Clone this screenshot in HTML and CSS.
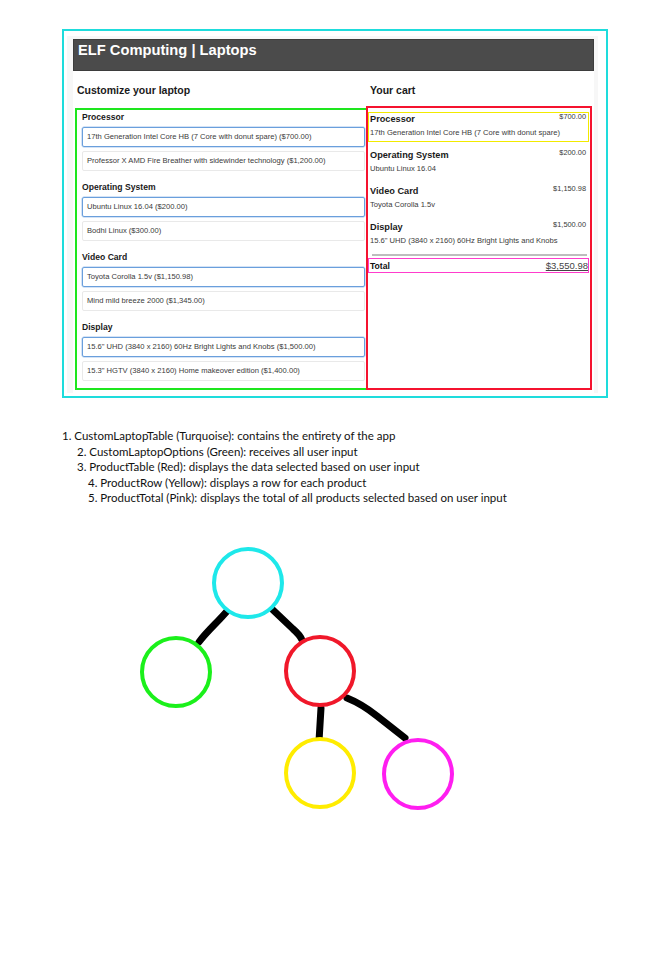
FILE: index.html
```html
<!DOCTYPE html>
<html>
<head>
<meta charset="utf-8">
<link rel="stylesheet" href="styles.css">
</head>
<body>
<div class="frame">
  <div class="card">
    <div class="topbar">ELF Computing | Laptops</div>
    <div class="main">
      <div class="col-title">Customize your laptop</div>
      <div class="col-title cart-title">Your cart</div>
      <div class="options">
        <div class="section">
          <div class="sec-head">Processor</div>
          <div class="opt selected">17th Generation Intel Core HB (7 Core with donut spare) ($700.00)</div>
          <div class="opt">Professor X AMD Fire Breather with sidewinder technology ($1,200.00)</div>
        </div>
        <div class="section">
          <div class="sec-head">Operating System</div>
          <div class="opt selected">Ubuntu Linux 16.04 ($200.00)</div>
          <div class="opt">Bodhi Linux ($300.00)</div>
        </div>
        <div class="section">
          <div class="sec-head">Video Card</div>
          <div class="opt selected">Toyota Corolla 1.5v ($1,150.98)</div>
          <div class="opt">Mind mild breeze 2000 ($1,345.00)</div>
        </div>
        <div class="section">
          <div class="sec-head">Display</div>
          <div class="opt selected">15.6" UHD (3840 x 2160) 60Hz Bright Lights and Knobs ($1,500.00)</div>
          <div class="opt">15.3" HGTV (3840 x 2160) Home makeover edition ($1,400.00)</div>
        </div>
      </div>
      <div class="cart">
        <div class="row first">
          <div class="row-head"><span class="row-name">Processor</span><span class="row-price">$700.00</span></div>
          <div class="row-sub">17th Generation Intel Core HB (7 Core with donut spare)</div>
        </div>
        <div class="row">
          <div class="row-head"><span class="row-name">Operating System</span><span class="row-price">$200.00</span></div>
          <div class="row-sub">Ubuntu Linux 16.04</div>
        </div>
        <div class="row">
          <div class="row-head"><span class="row-name">Video Card</span><span class="row-price">$1,150.98</span></div>
          <div class="row-sub">Toyota Corolla 1.5v</div>
        </div>
        <div class="row">
          <div class="row-head"><span class="row-name">Display</span><span class="row-price">$1,500.00</span></div>
          <div class="row-sub">15.6" UHD (3840 x 2160) 60Hz Bright Lights and Knobs</div>
        </div>
        <div class="sep"></div>
        <div class="total">
          <span class="total-label">Total</span>
          <span class="total-value">$3,550.98</span>
        </div>
      </div>
    </div>
  </div>
</div>

<div class="legend">
  <div class="li l1">1. CustomLaptopTable (Turquoise): contains the entirety of the app</div>
  <div class="li l2">2. CustomLaptopOptions (Green): receives all user input</div>
  <div class="li l2">3. ProductTable (Red): displays the data selected based on user input</div>
  <div class="li l3">4. ProductRow (Yellow): displays a row for each product</div>
  <div class="li l3">5. ProductTotal (Pink): displays the total of all products selected based on user input</div>
</div>

<svg class="tree" width="340" height="280" viewBox="0 0 340 280">
  <g fill="none" stroke="#000" stroke-width="7" stroke-linecap="round">
    <path d="M98 70 C 88 82, 78 90, 69 102"/>
    <path d="M143 70 L163 89 Q170 95 172 100"/>
    <path d="M191 168 L189 201"/>
    <path d="M217 158 Q232 164 247 176 L275 198"/>
  </g>
  <g fill="#fff" stroke-width="4">
    <circle cx="118" cy="43" r="34" stroke="#1ee8ea"/>
    <circle cx="46" cy="132" r="34" stroke="#1bf01b"/>
    <circle cx="190" cy="131" r="34" stroke="#f0182a"/>
    <circle cx="190" cy="233" r="34" stroke="#ffec00"/>
    <circle cx="288" cy="234" r="34" stroke="#ff1ef0"/>
  </g>
</svg>
</body>
</html>
```

FILE: styles.css
```css
* { box-sizing: border-box; }
html, body { margin: 0; padding: 0; background: #fff; }
body { width: 671px; font-family: "Liberation Sans", Arial, sans-serif; color: #222; }

.frame {
  margin: 29px 0 0 62px;
  width: 546px;
  height: 369px;
  border: 2px solid #1edcdc;
  padding: 5px 8px 3px 3px;
}
.card {
  height: 100%;
  background: #f7f7f7;
  padding: 3px 4px 3px 6px;
}
.topbar {
  height: 32px;
  background: #4b4b4b;
  color: #fff;
  font-weight: bold;
  font-size: 14.7px;
  line-height: 20px;
  padding: 0 0 0 4px;
  border: 1px solid #3d3d3d;
}
.main {
  background: #fff;
  display: grid;
  grid-template-columns: 291px 226px;
  grid-template-rows: 35px auto;
  padding: 0 0 3px 2px;
  height: 322px;
}
.col-title {
  font-weight: bold;
  font-size: 10.5px;
  line-height: 12px;
  padding: 13px 0 0 2px;
  color: #1a1a1a;
}
.cart-title { padding-left: 4px; }

.options {
  margin-top: 2px;
  border: 2px solid #1ee61e;
  border-right-width: 0;
  padding: 0 1px 0 5px;
  height: 282px;
}
.section { padding-bottom: 9px; }
.sec-head {
  font-weight: bold;
  font-size: 8.6px;
  line-height: 14px;
  color: #1a1a1a;
  margin-bottom: 3px;
}
.opt {
  height: 20px;
  border: 1px solid #e9e9e9;
  border-radius: 2px;
  font-size: 7.6px;
  line-height: 18px;
  padding-left: 4px;
  color: #3a3a3a;
  white-space: nowrap;
  overflow: hidden;
  margin-bottom: 4px;
}
.opt:last-child { margin-bottom: 0; }
.opt.selected {
  border: 1px solid #6a9fdc;
  box-shadow: 0 0 0 0.5px #a9c8ee;
}

.cart {
  border: 2px solid #f5132f;
  padding: 4px 1px 0 0;
  height: 284px;
}
.row {
  height: 30px;
  border: 1px solid transparent;
  padding: 0 1px 0 1px;
  margin-bottom: 6px;
}
.row.first { border-color: #f2ea00; }
.row-head {
  display: flex;
  justify-content: space-between;
  align-items: flex-start;
  height: 12px;
}
.row-name {
  font-weight: bold;
  font-size: 9.2px;
  line-height: 12px;
  color: #1a1a1a;
}
.row-price {
  font-size: 7.4px;
  line-height: 8px;
  color: #3a3a3a;
  padding-right: 1px;
}
.row-sub {
  margin-top: 2px;
  font-size: 7.6px;
  line-height: 12px;
  color: #3a3a3a;
  white-space: nowrap;
}
.sep {
  margin: -2px 2px 0 4px;
  border-top: 2px solid #bdbdbd;
}
.total {
  margin-top: 2px;
  height: 15px;
  border: 1px solid #ff3ccc;
  display: flex;
  justify-content: space-between;
  align-items: center;
  padding: 0 0 0 1px;
}
.total-label {
  font-weight: bold;
  font-size: 8.6px;
  color: #111;
}
.total-value {
  font-size: 9.5px;
  color: #444;
  text-decoration: underline;
}

.legend {
  margin-top: 30px;
  font-family: "Lato", "Open Sans", sans-serif;
  font-size: 11.5px;
  line-height: 15.5px;
  color: #111;
}
.li { white-space: nowrap; }
.l1 { padding-left: 62px; }
.l2 { padding-left: 77px; }
.l3 { padding-left: 88px; }

.tree {
  display: block;
  margin: 34px 0 0 130px;
}
```
